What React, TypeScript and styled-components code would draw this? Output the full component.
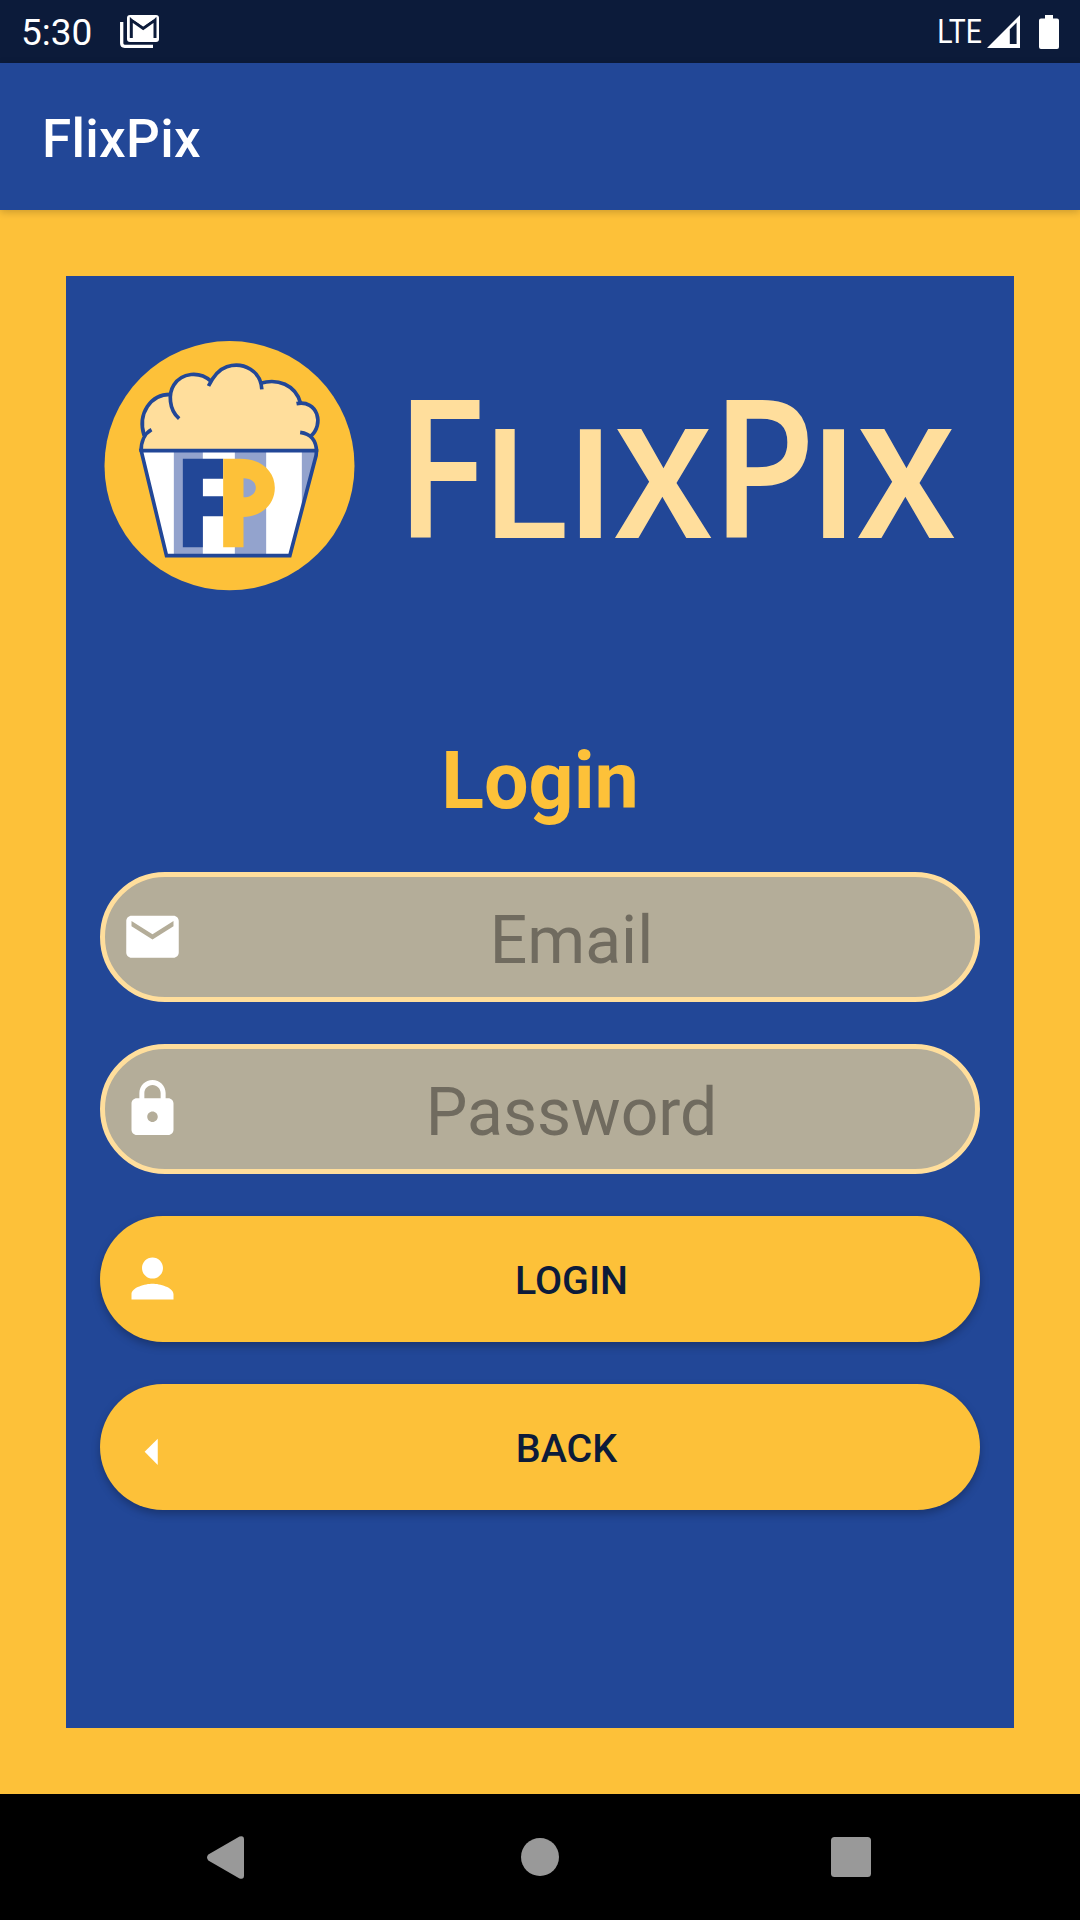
import React from "react";
import styled, { createGlobalStyle } from "styled-components";

const color = {
  navy: "#0c1b3a",
  blue: "#224797",
  yellow: "#fdc139",
  cream: "#ffde9c",
  field: "#b4ad99",
  hint: "#706b5f",
  stripe: "#93a3cd",
  nav: "#999999",
};

const GlobalStyle = createGlobalStyle`
  * { box-sizing: border-box; }
  body { margin: 0; background: #000; font-family: Roboto, "Liberation Sans", sans-serif; }
  svg { display: block; flex: none; overflow: visible; }
`;

const Screen = styled.div`
  width: 1080px;
  height: 1920px;
  display: flex;
  flex-direction: column;
  overflow: hidden;
`;

const StatusBar = styled.header`
  height: 63px;
  flex: none;
  display: flex;
  align-items: center;
  justify-content: space-between;
  padding: 0 21px;
  background: ${color.navy};
  color: #fff;
`;

const StatusGroup = styled.div<{ $gap: number }>`
  display: flex;
  align-items: center;
  gap: ${(p) => p.$gap}px;
`;

const StatusText = styled.span<{ $size: number; $drop: number; $squeeze?: number }>`
  font-size: ${(p) => p.$size}px;
  line-height: 44px;
  padding-top: ${(p) => p.$drop}px;
  transform: scaleX(${(p) => p.$squeeze ?? 1});
  transform-origin: right center;
`;

const AppBar = styled.div`
  height: 147px;
  flex: none;
  display: flex;
  align-items: center;
  padding: 4px 42px 0;
  background: ${color.blue};
  color: #fff;
  font-size: 53px;
  font-weight: 500;
  letter-spacing: 0.3px;
  box-shadow: 0 2px 8px rgba(0, 0, 0, 0.2);
  z-index: 1;
`;

const Body = styled.main`
  flex: 1;
  padding: 66px;
  background: ${color.yellow};
`;

const Card = styled.section`
  height: 100%;
  padding: 65px 34px 0;
  background: ${color.blue};
`;

const Brand = styled.div`
  display: flex;
  align-items: flex-start;
  gap: 39px;
  margin-left: 4px;
  height: 250px;
`;

const Title = styled.h1`
  margin: 144px 0 45px;
  font-size: 79px;
  line-height: 92px;
  font-weight: 700;
  text-align: center;
  color: ${color.yellow};
`;

const Form = styled.form`
  display: flex;
  flex-direction: column;
  gap: 42px;
`;

const Field = styled.label`
  height: 130px;
  display: flex;
  align-items: center;
  padding: 0 16px;
  border: 5px solid ${color.cream};
  border-radius: 65px;
  background: ${color.field};
`;

const Input = styled.input`
  flex: 1;
  min-width: 0;
  height: 100%;
  padding: 7px 0 0;
  border: 0;
  outline: 0;
  background: transparent;
  font: 400 66px Roboto, "Liberation Sans", sans-serif;
  text-align: center;
  color: ${color.navy};
  &::placeholder {
    color: ${color.hint};
    opacity: 1;
  }
`;

const Button = styled.button`
  height: 126px;
  display: flex;
  align-items: center;
  padding: 0 21px;
  border: 0;
  border-radius: 63px;
  background: ${color.yellow};
  box-shadow: 0 4px 8px rgba(0, 0, 0, 0.26);
  color: ${color.navy};
`;

const ButtonLabel = styled.span<{ $inset: number }>`
  flex: 1;
  padding: 2px ${(p) => p.$inset}px 0 0;
  font: 500 39.4px Roboto, "Liberation Sans", sans-serif;
  text-align: center;
`;

const NavBar = styled.nav`
  height: 126px;
  flex: none;
  display: grid;
  grid-template-columns: 37px 1fr 40px;
  align-items: center;
  justify-items: center;
  padding: 0 209px 0 207px;
  background: #000;
`;

const HomeDot = styled.span`
  width: 38px;
  height: 38px;
  margin-left: 5px;
  border-radius: 50%;
  background: ${color.nav};
`;

const RecentsSquare = styled.span`
  width: 40px;
  height: 40px;
  border-radius: 3.5px;
  background: ${color.nav};
`;

function Icon({ d, dy = 0 }: { d: string; dy?: number }) {
  return (
    <svg width="63" height="63" viewBox={`0 ${-dy} 24 24`} fill="#fff">
      <path d={d} />
    </svg>
  );
}

const icons = {
  mail: "M20 4H4c-1.1 0-1.99.9-1.99 2L2 18c0 1.1.9 2 2 2h16c1.1 0 2-.9 2-2V6c0-1.1-.9-2-2-2zm0 4l-8 5-8-5V6l8 5 8-5v2z",
  lock: "M18 8h-1V6c0-2.76-2.24-5-5-5S7 3.24 7 6v2H6c-1.1 0-2 .9-2 2v10c0 1.1.9 2 2 2h12c1.1 0 2-.9 2-2V10c0-1.1-.9-2-2-2zm-6 9c-1.1 0-2-.9-2-2s.9-2 2-2 2 .9 2 2-.9 2-2 2zm3.1-9H8.9V6c0-1.71 1.39-3.1 3.1-3.1 1.71 0 3.1 1.39 3.1 3.1v2z",
  person: "M12 12c2.21 0 4-1.79 4-4s-1.79-4-4-4-4 1.79-4 4 1.79 4 4 4zm0 2c-2.67 0-8 1.34-8 4v2h16v-2c0-2.66-5.33-4-8-4z",
  arrow: "M14 7l-5 5 5 5V7z",
};

function MailStackIcon() {
  return (
    <svg width="39" height="33" viewBox="0 0 39 33">
      <path d="M1.7 7v21.3q0 3 3 3H33" fill="none" stroke="#fff" strokeWidth="3.3" />
      <rect x="7" y="0" width="32" height="27" rx="3" fill="#fff" />
      <path d="M11.3 23V5l11.9 8.4L35 5v18" fill="none" stroke={color.navy} strokeWidth="3" />
      <path d="M11 3.3h24.3l-12 7.6z" fill="#fff" />
    </svg>
  );
}

function SignalIcon() {
  return (
    <svg width="33" height="33" viewBox="0 0 33 33">
      <path fillRule="evenodd" d="M33 0v33H0zM22.8 14.3V29h6.8V7.6z" fill="#fff" />
    </svg>
  );
}

function BatteryIcon() {
  return (
    <svg width="20" height="34" viewBox="0 0 20 34">
      <path d="M6 0h8v3.5h4q2 0 2 2V32q0 2-2 2H2q-2 0-2-2V5.500q0-2 2-2h4z" fill="#fff" />
    </svg>
  );
}

function PopcornLogo() {
  const line = { fill: "none", stroke: color.blue, strokeWidth: 11 };
  return (
    <svg width="252" height="252" viewBox="42.5 33 756 756">
      <ellipse cx="419" cy="407" rx="375" ry="374" fill={color.yellow} />
      <path
        fill={color.cream}
        d="M154 362C154 345 158 327 164 313C140 245 190 190 243 193C255 133 325 115 363 153C395 85 500 90 516 160C560 143 617 165 632 217C690 220 700 285 664 317C676 330 681 345 680 362Z"
      />
      <path fill="#fff" d="M154 362H680V380L600 677H230Z" />
      <path fill={color.stripe} d="M252 362h87v315h-87zM435 362h94v315h-94zM636 362H680V380L636 545z" />
      <path {...line} d="M154 362H680C680 375 678 383 675 391L600 677H230Z" />
      <path {...line} d="M154 365C153 335 165 310 185 299" />
      <path {...line} d="M163 317C142 250 183 192 243 193" />
      <path {...line} d="M268 266C236 238 236 190 252 165C276 128 328 122 364 154" />
      <path {...line} d="M356 168C368 143 384 119 411 110C462 94 514 124 516 178" />
      <path {...line} d="M512 160C562 144 617 164 632 219" />
      <path {...line} d="M620 221C684 208 704 284 662 319" />
      <path {...line} d="M631 307C662 311 680 331 680 365" />
      <path fill={color.blue} d="M279 386H400V446H339V499H400V559H339V652H279z" />
      <path
        fill={color.yellow}
        fillRule="evenodd"
        d="M400 386H452C514 386 555 424 555 473C555 524 515 559 461 561V652H400zM461 445V502C484 502 498 489 498 473C498 457 484 445 461 445z"
      />
    </svg>
  );
}

const wordmark = [
  { ch: "F", x: 0, size: 193, sx: 0.88, weight: 600 },
  { ch: "L", x: 85, size: 152, sx: 1.08, weight: 600 },
  { ch: "I", x: 168.3, size: 152, sx: 1.17, weight: 600 },
  { ch: "X", x: 220, size: 152, sx: 0.95, weight: 700 },
  { ch: "P", x: 315.5, size: 193, sx: 0.89, weight: 600 },
  { ch: "I", x: 411.6, size: 152, sx: 1.17, weight: 600 },
  { ch: "X", x: 463, size: 152, sx: 0.95, weight: 700 },
];

function Wordmark() {
  return (
    <svg width="570" height="250" viewBox="0 0 570 250" fill={color.cream}>
      {wordmark.map((g, i) => (
        <text
          key={i}
          transform={`translate(${g.x} 197) scale(${g.sx} 1)`}
          fontFamily='"Open Sans", "Noto Sans", sans-serif'
          fontWeight={g.weight}
          fontSize={g.size}
        >
          {g.ch}
        </text>
      ))}
    </svg>
  );
}

export default function App() {
  return (
    <Screen>
      <GlobalStyle />
      <StatusBar>
        <StatusGroup $gap={28}>
          <StatusText $size={37} $drop={3}>5:30</StatusText>
          <MailStackIcon />
        </StatusGroup>
        <StatusGroup $gap={19}>
          <StatusGroup $gap={5}>
            <StatusText $size={33} $drop={0} $squeeze={0.86}>LTE</StatusText>
            <SignalIcon />
          </StatusGroup>
          <BatteryIcon />
        </StatusGroup>
      </StatusBar>
      <AppBar>FlixPix</AppBar>
      <Body>
        <Card>
          <Brand>
            <PopcornLogo />
            <Wordmark />
          </Brand>
          <Title>Login</Title>
          <Form onSubmit={(e) => e.preventDefault()}>
            <Field>
              <Icon d={icons.mail} dy={-0.25} />
              <Input type="email" placeholder="Email" />
            </Field>
            <Field>
              <Icon d={icons.lock} dy={-0.25} />
              <Input type="password" placeholder="Password" />
            </Field>
            <Button type="submit">
              <Icon d={icons.person} dy={-0.35} />
              <ButtonLabel $inset={0}>LOGIN</ButtonLabel>
            </Button>
            <Button type="button">
              <Icon d={icons.arrow} dy={1.65} />
              <ButtonLabel $inset={10}>BACK</ButtonLabel>
            </Button>
          </Form>
        </Card>
      </Body>
      <NavBar>
        <svg width="37" height="43" viewBox="0 0 37 43" fill={color.nav}>
          <path d="M1.300 18.600L32.500 .6Q37-.8 37 3.500V39.500Q37 43.800 32.500 42.400L1.300 24.400Q-1.300 21.500 1.300 18.600z" />
        </svg>
        <HomeDot />
        <RecentsSquare />
      </NavBar>
    </Screen>
  );
}
